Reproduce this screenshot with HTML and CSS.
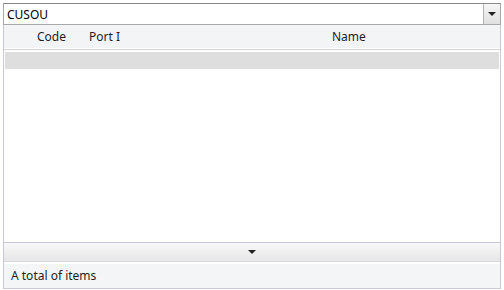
FILE: index.html
```html
<!DOCTYPE html>
<html>
<head>
<link rel="stylesheet" href="styles.css">
</head>
<body>
<div id="portPicker">
   <div class="combo">
      <input type="text" class="comboText" value="CUSOU" />
      <div class="comboBtn"><span class="arrow"></span></div>
   </div>
   <div class="grid">
      <div class="gridHead">
         <div class="col colCode">Code</div>
         <div class="col colPort">Port I</div>
         <div class="col colName">Name</div>
      </div>
      <div class="gridBody">
         <div class="gridRow"></div>
      </div>
      <div class="pager"><span class="arrow"></span></div>
      <div class="gridFoot">A total of items</div>
   </div>
</div>
</body>
</html>
```

FILE: styles.css
```css
body
{
   margin: 0;
   font-family: 'Noto Sans', sans-serif;
   font-size: 12px;
   color: #1e1e1e;
   background: #fff;
}

#portPicker
{
   width: 498px;
   padding: 3px 0 0 3px;
}

.combo
{
   display: flex;
   height: 20px;
   border: 1px solid #a8a8a8;
   border-top-color: #8a8a8a;
   background: #fff;
}

.comboText
{
   flex: 1;
   border: 0;
   padding: 0 0 0 3px;
   font-family: inherit;
   font-size: 12px;
   color: #000;
   outline: none;
}

.comboBtn
{
   width: 16px;
   border-left: 1px solid #b4b4b4;
   background: linear-gradient(#f6f6f6, #e0e0e0);
   display: flex;
   align-items: center;
   justify-content: center;
}

.arrow
{
   width: 0;
   height: 0;
   border-left: 4px solid transparent;
   border-right: 4px solid transparent;
   border-top: 4px solid #222;
}

.grid
{
   border-left: 1px solid #c9c8d6;
   border-right: 1px solid #c9c8d6;
   border-bottom: 1px solid #c9c8d6;
   display: flex;
   flex-direction: column;
   height: 263px;
}

.gridHead
{
   display: flex;
   height: 23px;
   align-items: center;
   background: #f3f4f6;
   border-bottom: 1px solid #fff;
   box-shadow: 0 1px 0 #d5d5d5;
   margin-bottom: 3px;
}

.col
{
   line-height: 23px;
}

.colCode
{
   padding-left: 33px;
   width: 52px;
}

.colPort
{
   width: 243px;
}

.colName
{
   flex: 1;
}

.gridBody
{
   flex: 1;
   padding: 0 1px;
}

.gridRow
{
   height: 17px;
   background: #dedede;
}

.pager
{
   height: 18px;
   border-top: 1px solid #c9c8d6;
   border-bottom: 1px solid #d8d8dc;
   background: linear-gradient(#f8f8f8, #e6e6e6);
   display: flex;
   align-items: center;
   justify-content: center;
   margin-bottom: 1px;
}

.gridFoot
{
   height: 24px;
   line-height: 24px;
   padding-left: 7px;
   background: #f4f5f7;
   border-top: 1px solid #fff;
}
```
